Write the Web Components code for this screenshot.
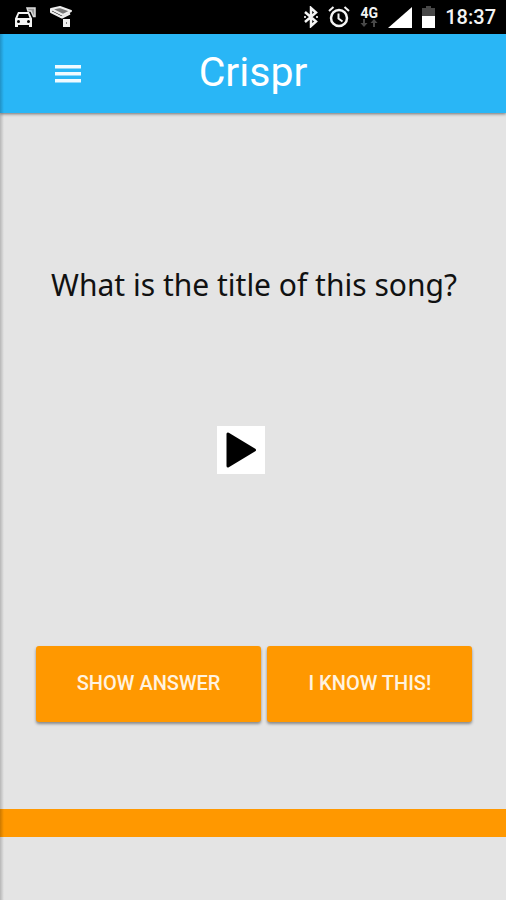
<!DOCTYPE html>
<html lang="en">
<head>
<meta charset="utf-8">
<meta name="viewport" content="width=device-width, initial-scale=1">
<title>Crispr</title>
<style>
    body {
        margin: 0;
        font-family: Roboto, "Liberation Sans", sans-serif;
        background: #e4e4e4;
    }
</style>
</head>
<body>
<crispr-app>
    <status-bar slot="status" time="18:37" network="4G"></status-bar>
    <app-header slot="header">Crispr</app-header>
    <quiz-card>
        What is the title of this song?
        <play-button slot="media"></play-button>
        <raised-button slot="actions">SHOW ANSWER</raised-button>
        <raised-button slot="actions">I KNOW THIS!</raised-button>
    </quiz-card>
    <progress-strip slot="footer"></progress-strip>
</crispr-app>

<script>
function makeTemplate(html) {
    const template = document.createElement('template');
    template.innerHTML = html;
    return template;
}

class BaseElement extends HTMLElement {
    constructor() {
        super();
        this.attachShadow({ mode: 'open' });
        this.shadowRoot.appendChild(this.constructor.template.content.cloneNode(true));
    }
}

class CrisprApp extends BaseElement {
    static template = makeTemplate(/*html*/`
<style>
    :host {
        display: flex;
        flex-direction: column;
        min-height: 100vh;
    }
    .screen {
        position: relative;
        flex: 1;
        display: flex;
        flex-direction: column;
    }
    /* edge of the closed side drawer */
    .screen::before {
        content: '';
        position: absolute;
        z-index: 2;
        top: 0;
        bottom: 0;
        left: 0;
        width: 4px;
        background: linear-gradient(to right, rgba(0,0,0,0.2), rgba(0,0,0,0));
        pointer-events: none;
    }
    main {
        flex: 1;
        display: flex;
        flex-direction: column;
    }
    footer {
        padding-bottom: 63px;
    }
</style>
<slot name="status"></slot>
<div class="screen">
    <slot name="header"></slot>
    <main><slot></slot></main>
    <footer><slot name="footer"></slot></footer>
</div>
`);
}

class StatusBar extends BaseElement {
    static template = makeTemplate(/*html*/`
<style>
    :host {
        display: flex;
        justify-content: space-between;
        align-items: center;
        height: 34px;
        padding: 0 10px 0 14px;
        background: #000;
        color: #f4f4f4;
    }
    .group {
        display: flex;
        align-items: center;
        gap: 10px;
    }
    .left {
        gap: 12px;
    }
    svg {
        display: block;
    }
    .network {
        display: flex;
        flex-direction: column;
        align-items: center;
        font-size: 14px;
        line-height: 12px;
        font-weight: 700;
    }
    time {
        font-size: 20px;
        line-height: 24px;
        font-weight: 500;
    }
</style>
<div class="group left">
    <svg width="24" height="22" viewBox="0 0 24 22" aria-hidden="true">
        <path fill="#f4f4f4" fill-rule="evenodd" d="M4 6h11l3 6.500V21h-3v-2H4v2H1v-8.500zM5 8l-1.500 4h12L14 8zM4.500 14a1.500 1.500 0 1 0 0 3a1.500 1.500 0 0 0 0-3zM14.500 14a1.500 1.500 0 1 0 0 3a1.500 1.500 0 0 0 0-3z"/>
        <path fill="#999" stroke="#ddd" stroke-width="1.500" d="M13 2h8v8.500h-1.500L17 5h-3z"/>
    </svg>
    <svg width="22" height="22" viewBox="0 0 22 22" aria-hidden="true">
        <path fill="#777" stroke="#eee" stroke-width="2" stroke-linejoin="round" d="M1 3l9-2l11 4l-8 4z"/>
        <path fill="none" stroke="#eee" stroke-width="2" stroke-linejoin="round" d="M1 3v3l11 5.500l8-4"/>
        <path fill="#f0f0f0" d="M13 13h7v8h-7z"/>
        <path fill="#888" d="M16 16h1v2h-1z"/>
    </svg>
</div>
<div class="group">
    <svg width="15" height="22" viewBox="0 0 15 22" aria-hidden="true">
        <path fill="none" stroke="#f4f4f4" stroke-width="2.500" d="M2 6l11 9.500l-5 4.500V2l5 4.500L2 16"/>
        <path fill="#ccc" d="M1 10h2v2H1zM13 10h2v2h-2z"/>
    </svg>
    <svg width="22" height="22" viewBox="0 0 22 22" aria-hidden="true">
        <circle cx="11" cy="12" r="8" fill="none" stroke="#f4f4f4" stroke-width="2.500"/>
        <path fill="none" stroke="#f4f4f4" stroke-width="2" d="M10.500 7.500v5l4 3M1 5l4.500-4M21 5l-4.500-4"/>
    </svg>
    <div class="network">
        <span id="network"></span>
        <svg width="18" height="8" viewBox="0 0 18 8" aria-hidden="true">
            <path fill="#484848" d="M3 0h2v4h2.500L4 8L.500 4H3zM13 8h2V4h2.500L14 0l-3.500 4H13z"/>
        </svg>
    </div>
    <svg width="24" height="21" viewBox="0 0 24 21" aria-hidden="true">
        <path fill="#fff" d="M24 0v21H0z"/>
    </svg>
    <svg width="13" height="22" viewBox="0 0 13 22" aria-hidden="true">
        <path fill="#484848" d="M4 0h5v2h4v9H0V2h4z"/>
        <path fill="#fff" d="M0 10h13v12H0z"/>
    </svg>
    <time id="time"></time>
</div>
`);

    connectedCallback() {
        this.shadowRoot.getElementById('time').textContent = this.getAttribute('time');
        this.shadowRoot.getElementById('network').textContent = this.getAttribute('network');
    }
}

class AppHeader extends BaseElement {
    static template = makeTemplate(/*html*/`
<style>
    :host {
        position: relative;
        z-index: 1;
        display: grid;
        grid-template-columns: 1fr auto 1fr;
        align-items: center;
        height: 79px;
        background: #29b6f6;
        color: #fff;
        box-shadow: 0 1px 3px rgba(0,0,0,0.5);
    }
    button {
        justify-self: start;
        margin: 0 0 0 48px;
        padding: 10px 7px;
        border: 0;
        background: none;
        color: #f0faff;
        cursor: pointer;
    }
    svg {
        display: block;
    }
    h1 {
        margin: 0;
        font-size: 41px;
        line-height: 48px;
        font-weight: 400;
        padding-bottom: 3px;
    }
</style>
<button type="button" aria-label="Menu">
    <svg width="26" height="18" viewBox="0 0 26 18" aria-hidden="true">
        <path fill="currentColor" d="M0 0h26v3.500H0zM0 7h26v3.500H0zM0 14h26v3.500H0z"/>
    </svg>
</button>
<h1><slot></slot></h1>
`);
}

class QuizCard extends BaseElement {
    static template = makeTemplate(/*html*/`
<style>
    :host {
        flex: 1;
        display: flex;
        flex-direction: column;
        align-items: center;
        padding: 152px 16px 0 18px;
    }
    h2 {
        margin: 0;
        font-family: "Noto Sans", "Open Sans", sans-serif;
        font-size: 30px;
        line-height: 40px;
        font-weight: 400;
        color: #111;
        text-align: center;
    }
    .media {
        padding: 121px 26px 172px 0;
    }
    .actions {
        display: flex;
        flex-wrap: wrap;
        justify-content: center;
        gap: 6px;
    }
</style>
<h2><slot></slot></h2>
<div class="media"><slot name="media"></slot></div>
<div class="actions"><slot name="actions"></slot></div>
`);
}

class PlayButton extends BaseElement {
    static template = makeTemplate(/*html*/`
<style>
    :host {
        display: block;
    }
    button {
        display: block;
        padding: 0;
        border: 0;
        background: #fff;
        cursor: pointer;
    }
    svg {
        display: block;
    }
</style>
<button type="button" aria-label="Play">
    <svg width="48" height="48" viewBox="0 0 48 48" aria-hidden="true">
        <path stroke="#000" stroke-width="3" stroke-linejoin="round" d="M11 8v32l26.500-16z"/>
    </svg>
</button>
`);
}

class RaisedButton extends BaseElement {
    static template = makeTemplate(/*html*/`
<style>
    :host {
        display: block;
    }
    button {
        display: block;
        height: 76px;
        padding: 0 41px 2px;
        border: 0;
        border-radius: 3px;
        background: #ff9800;
        color: #fff3e0;
        font-family: inherit;
        font-size: 20px;
        line-height: 24px;
        font-weight: 500;
        box-shadow: 0 2px 3px rgba(0,0,0,0.4);
        cursor: pointer;
    }
</style>
<button type="button"><slot></slot></button>
`);
}

class ProgressStrip extends BaseElement {
    static template = makeTemplate(/*html*/`
<style>
    :host {
        display: block;
        height: 28px;
        background: #ff9800;
    }
</style>
`);
}

customElements.define('crispr-app', CrisprApp);
customElements.define('status-bar', StatusBar);
customElements.define('app-header', AppHeader);
customElements.define('quiz-card', QuizCard);
customElements.define('play-button', PlayButton);
customElements.define('raised-button', RaisedButton);
customElements.define('progress-strip', ProgressStrip);
</script>
</body>
</html>
